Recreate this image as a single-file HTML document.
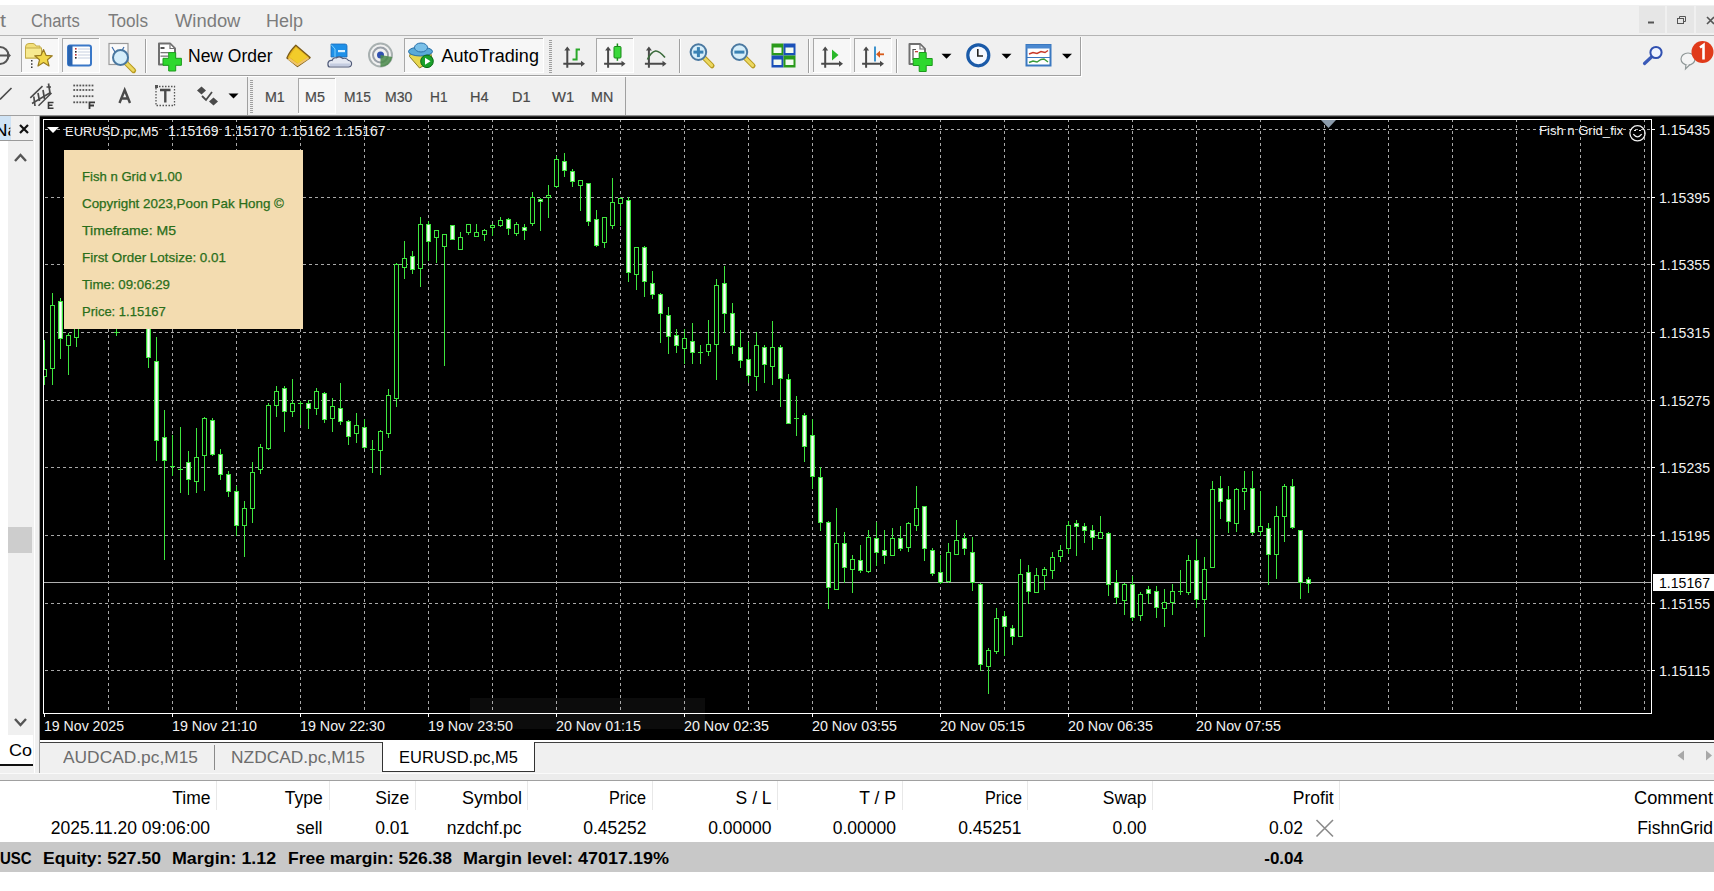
<!DOCTYPE html><html><head><meta charset="utf-8"><style>
*{margin:0;padding:0;box-sizing:border-box}
html,body{width:1714px;height:891px;overflow:hidden;background:#f0f0f0;font-family:"Liberation Sans",sans-serif;position:relative}
.a{position:absolute}
</style></head><body>
<div class="a" style="left:0;top:0;width:1714px;height:5px;background:#fff"></div>
<div class="a" style="left:1639px;top:6px;width:26px;height:27px;background:#e6e6e6"></div>
<div class="a" style="left:1667px;top:6px;width:27px;height:27px;background:#e6e6e6"></div>
<div class="a" style="left:1696px;top:6px;width:18px;height:27px;background:#e6e6e6"></div>
<div class="a" style="left:0;top:35px;width:1714px;height:1px;background:#b4b4b4"></div>
<div class="a" style="left:0;top:75px;width:1081px;height:1px;background:#a0a0a0"></div>
<div class="a" style="left:0;top:76px;width:1082px;height:1px;background:#fff"></div>
<div class="a" style="left:1081px;top:37px;width:1px;height:39px;background:#fff"></div>
<svg style="position:absolute;left:0;top:0" width="1714" height="116" viewBox="0 0 1714 116">
<circle cx="0" cy="55.5" r="8.5" fill="none" stroke="#555" stroke-width="2"/><path d="M-2 55.5H9" stroke="#555" stroke-width="2"/><path d="M7 52L11 55.5L7 59Z" fill="#555"/>
<rect x="21" y="38" width="38" height="35" fill="#f7f7f7"/><rect x="21" y="38" width="38" height="1" fill="#a8a8a8"/><rect x="21" y="38" width="1" height="35" fill="#a8a8a8"/><rect x="58" y="38" width="1" height="35" fill="#ffffff"/><rect x="21" y="72" width="38" height="1" fill="#ffffff"/>
<rect x="62" y="38" width="38" height="35" fill="#f7f7f7"/><rect x="62" y="38" width="38" height="1" fill="#a8a8a8"/><rect x="62" y="38" width="1" height="35" fill="#a8a8a8"/><rect x="99" y="38" width="1" height="35" fill="#ffffff"/><rect x="62" y="72" width="38" height="1" fill="#ffffff"/>
<path d="M25.5 47Q25.5 43.5 29 43.5H33Q35 43.5 36 46H40V58H25.5Z" fill="#f3e07a" stroke="#c4ac48" stroke-width="1"/>
<rect x="25.5" y="48" width="16" height="10" fill="#f7ea90" stroke="#c4ac48" stroke-width="1"/>
<path d="M43.5 49.5L46 55.3L52.3 55.8L47.5 59.8L49 66L43.5 62.6L38 66L39.5 59.8L34.7 55.8L41 55.3Z" fill="#f2d84a" stroke="#9a7c20" stroke-width="1.2" stroke-linejoin="round"/>
<rect x="31" y="60" width="1.5" height="1.5" fill="#333"/><rect x="31" y="63.3" width="1.5" height="1.5" fill="#333"/><rect x="31" y="66.5" width="1.5" height="1.5" fill="#333"/>
<rect x="68" y="45.5" width="23" height="20" rx="2" fill="#fff" stroke="#3a78c8" stroke-width="2"/>
<rect x="68" y="45.5" width="4.5" height="20" fill="#2a64b0"/>
<rect x="75" y="48.0" width="1.6" height="1.6" fill="#c03030"/><rect x="78" y="48.5" width="12" height="1" fill="#c8d0e0"/>
<rect x="75" y="51.0" width="1.6" height="1.6" fill="#222"/><rect x="78" y="51.5" width="12" height="1" fill="#c8d0e0"/>
<rect x="75" y="54.0" width="1.6" height="1.6" fill="#c03030"/><rect x="78" y="54.5" width="12" height="1" fill="#c8d0e0"/>
<rect x="75" y="57.0" width="1.6" height="1.6" fill="#222"/><rect x="78" y="57.5" width="12" height="1" fill="#c8d0e0"/>
<rect x="109" y="43.5" width="19" height="21" fill="#fafafa" stroke="#9a9a9a" stroke-width="1.2"/>
<path d="M112 47L115 52M124 47L121 52" stroke="#3a6aa8" stroke-width="1.2"/>
<path d="M125.75 62.75L133.625 70.625" stroke="#b89a20" stroke-width="5" stroke-linecap="round"/><path d="M126.125 63.125L133.25 70.25" stroke="#ecd860" stroke-width="3" stroke-linecap="round"/><circle cx="120.5" cy="57.5" r="7.5" fill="#d6eefa" stroke="#4a78a0" stroke-width="2"/>
<rect x="145" y="39" width="1" height="34" fill="#a0a0a0"/><rect x="146" y="39" width="1" height="34" fill="#ffffff"/>
<path d="M159 43.5H170L175 48.5V64.5H159Z" fill="#fff" stroke="#707070" stroke-width="2" stroke-linejoin="round"/><path d="M170 44.5V48.5H174" fill="#fff" stroke="#707070" stroke-width="1.2"/>
<rect x="160.5" y="47" width="4" height="2" fill="#555"/><rect x="160.5" y="52" width="9" height="1.3" fill="#777"/><rect x="160.5" y="55.5" width="8" height="1.3" fill="#777"/>
<path d="M168.7 52.599999999999994H175.7V58.3H181.39999999999998V65.3H175.7V71.0H168.7V65.3H163.0V58.3H168.7Z" fill="#2ed82e" stroke="#1c9a1c" stroke-width="1"/>
<path d="M295.8 45.3L310.1 57.6L297.5 66.5L286.9 58Q289.5 51.5 295.8 45.3Z" fill="#e6b41e" stroke="#7a5a18" stroke-width="1.3" stroke-linejoin="round"/>
<path d="M296 47.5L307.5 57L298 63.5L289.5 57Q292 52 296 47.5Z" fill="#f2cc2a"/>
<path d="M288.5 58.5L297.5 65L308.5 57.8" stroke="#f0c468" stroke-width="2.2" fill="none"/>
<path d="M331 44H345Q347 44 347 46V57H331Z" fill="#1e90e8" stroke="#1a6ab8" stroke-width="0.8"/>
<path d="M331 44.5L335 49V57" stroke="#7cd0ff" stroke-width="1" fill="none"/><rect x="338" y="50" width="7" height="2.2" fill="#d8f0ff"/>
<path d="M329.5 67Q327.5 66.5 328 63Q328.8 60 332 60.5Q333 57.5 336.5 57.8Q339.5 55.5 343 58.5Q346.5 57.5 348.5 60.5Q352 61 351.5 64.5Q351 67 348.5 67Z" fill="#e4e8f2" stroke="#505a78" stroke-width="1.2"/>
<rect x="330" y="63.5" width="20" height="2.5" fill="#c4cce0"/>
<circle cx="380.5" cy="55" r="11.5" fill="none" stroke="#a8b0b0" stroke-width="2"/><circle cx="380.5" cy="55" r="7.5" fill="none" stroke="#9aa0a8" stroke-width="2"/><circle cx="380.5" cy="55" r="3.5" fill="#3050b0"/>
<path d="M380.5 55L392.3 57A12 12 0 0 1 380.5 67Z" fill="#4a8a4a" opacity="0.85"/>
<rect x="404" y="38" width="140" height="35" fill="#f7f7f7"/><rect x="404" y="38" width="140" height="1" fill="#a8a8a8"/><rect x="404" y="38" width="1" height="35" fill="#a8a8a8"/><rect x="543" y="38" width="1" height="35" fill="#ffffff"/><rect x="404" y="72" width="140" height="1" fill="#ffffff"/>
<path d="M409.5 56.5L419.5 68L432.5 60.5L430.5 52.5H410.5Z" fill="#e8d850" stroke="#8a7a20" stroke-width="1"/>
<ellipse cx="420.5" cy="51.5" rx="12" ry="4.5" fill="#5aaad8" stroke="#2a70a8" stroke-width="1"/><ellipse cx="421" cy="47.5" rx="6.5" ry="4.5" fill="#7ac0e8" stroke="#2a70a8" stroke-width="1"/>
<circle cx="427" cy="61.3" r="6.3" fill="#1aa02a" stroke="#0a6a14" stroke-width="1"/><path d="M425 57.8L430.5 61.3L425 64.8Z" fill="#fff"/>
<rect x="549" y="40" width="3" height="1" fill="#a0a0a0"/><rect x="549" y="42" width="3" height="1" fill="#a0a0a0"/><rect x="549" y="44" width="3" height="1" fill="#a0a0a0"/><rect x="549" y="46" width="3" height="1" fill="#a0a0a0"/><rect x="549" y="48" width="3" height="1" fill="#a0a0a0"/><rect x="549" y="50" width="3" height="1" fill="#a0a0a0"/><rect x="549" y="52" width="3" height="1" fill="#a0a0a0"/><rect x="549" y="54" width="3" height="1" fill="#a0a0a0"/><rect x="549" y="56" width="3" height="1" fill="#a0a0a0"/><rect x="549" y="58" width="3" height="1" fill="#a0a0a0"/><rect x="549" y="60" width="3" height="1" fill="#a0a0a0"/><rect x="549" y="62" width="3" height="1" fill="#a0a0a0"/><rect x="549" y="64" width="3" height="1" fill="#a0a0a0"/><rect x="549" y="66" width="3" height="1" fill="#a0a0a0"/><rect x="549" y="68" width="3" height="1" fill="#a0a0a0"/><rect x="549" y="70" width="3" height="1" fill="#a0a0a0"/><rect x="549" y="72" width="3" height="1" fill="#a0a0a0"/>
<path d="M567.3 48.5V67.8 M563.3 63.8H583" stroke="#4a4a4a" stroke-width="2" fill="none"/><path d="M564.3 50.5L567.3 46.5L570.3 50.5Z M581 60.8L585 63.8L581 66.8Z" fill="#4a4a4a"/>
<path d="M576.6 48.5V60.5M576.6 49.5H580M572.5 59.5H576.6" stroke="#2aa82a" stroke-width="2" fill="none"/>
<rect x="596" y="38" width="38" height="35" fill="#f7f7f7"/><rect x="596" y="38" width="38" height="1" fill="#a8a8a8"/><rect x="596" y="38" width="1" height="35" fill="#a8a8a8"/><rect x="633" y="38" width="1" height="35" fill="#ffffff"/><rect x="596" y="72" width="38" height="1" fill="#ffffff"/>
<path d="M608.1 48.5V67.8 M604.1 63.8H623.5" stroke="#4a4a4a" stroke-width="2" fill="none"/><path d="M605.1 50.5L608.1 46.5L611.1 50.5Z M621.5 60.8L625.5 63.8L621.5 66.8Z" fill="#4a4a4a"/>
<path d="M617.4 43.5V60.8" stroke="#1a8a1a" stroke-width="1.5"/><rect x="614" y="46.5" width="7" height="11.5" rx="1" fill="#3ad83a" stroke="#1a8a1a" stroke-width="1"/>
<path d="M648.9 48.5V67.8 M644.9 63.8H664.5" stroke="#4a4a4a" stroke-width="2" fill="none"/><path d="M645.9 50.5L648.9 46.5L651.9 50.5Z M662.5 60.8L666.5 63.8L662.5 66.8Z" fill="#4a4a4a"/>
<path d="M647.5 59.5Q651 52 655.5 51Q659 50.5 665 57.5" stroke="#3a6a3a" stroke-width="1.6" fill="none"/>
<rect x="679" y="39" width="1" height="34" fill="#a0a0a0"/><rect x="680" y="39" width="1" height="34" fill="#ffffff"/>
<path d="M703.86 57.56L712.05 65.75" stroke="#b89a20" stroke-width="5" stroke-linecap="round"/><path d="M704.25 57.95L711.66 65.36" stroke="#ecd860" stroke-width="3" stroke-linecap="round"/><circle cx="698.4" cy="52.1" r="7.8" fill="#d6eefa" stroke="#4a78a0" stroke-width="2"/><path d="M693.4 52.1H703.4" stroke="#3a82b4" stroke-width="3"/><path d="M698.4 47.1V57.1" stroke="#3a82b4" stroke-width="3"/>
<path d="M744.86 57.56L753.05 65.75" stroke="#b89a20" stroke-width="5" stroke-linecap="round"/><path d="M745.25 57.95L752.66 65.36" stroke="#ecd860" stroke-width="3" stroke-linecap="round"/><circle cx="739.4" cy="52.1" r="7.8" fill="#d6eefa" stroke="#4a78a0" stroke-width="2"/><path d="M734.4 52.1H744.4" stroke="#3a82b4" stroke-width="3"/>
<rect x="771.5" y="43.5" width="12" height="12" fill="#2a9a1a"/><rect x="783.5" y="43.5" width="12" height="12" fill="#1a50b8"/><rect x="771.5" y="55.5" width="12" height="12" fill="#1a50b8"/><rect x="783.5" y="55.5" width="12" height="12" fill="#2a9a1a"/>
<rect x="773.5" y="47.5" width="8" height="5.5" fill="#f4fbf0"/>
<rect x="785.5" y="47.5" width="8" height="5.5" fill="#f4fbf0"/>
<rect x="773.5" y="59.5" width="8" height="5.5" fill="#f4fbf0"/>
<rect x="785.5" y="59.5" width="8" height="5.5" fill="#f4fbf0"/>
<rect x="808" y="39" width="1" height="34" fill="#a0a0a0"/><rect x="809" y="39" width="1" height="34" fill="#ffffff"/>
<rect x="813" y="38" width="38" height="35" fill="#f7f7f7"/><rect x="813" y="38" width="38" height="1" fill="#a8a8a8"/><rect x="813" y="38" width="1" height="35" fill="#a8a8a8"/><rect x="850" y="38" width="1" height="35" fill="#ffffff"/><rect x="813" y="72" width="38" height="1" fill="#ffffff"/>
<rect x="854" y="38" width="38" height="35" fill="#f7f7f7"/><rect x="854" y="38" width="38" height="1" fill="#a8a8a8"/><rect x="854" y="38" width="1" height="35" fill="#a8a8a8"/><rect x="891" y="38" width="1" height="35" fill="#ffffff"/><rect x="854" y="72" width="38" height="1" fill="#ffffff"/>
<path d="M825.2 48.5V67.8 M821.2 63.8H841" stroke="#4a4a4a" stroke-width="2" fill="none"/><path d="M822.2 50.5L825.2 46.5L828.2 50.5Z M839 60.8L843 63.8L839 66.8Z" fill="#4a4a4a"/>
<path d="M832 49.5L838.5 55L832 60.5Z" fill="#2ab82a"/>
<path d="M866.1 48.5V67.8 M862.1 63.8H882" stroke="#4a4a4a" stroke-width="2" fill="none"/><path d="M863.1 50.5L866.1 46.5L869.1 50.5Z M880 60.8L884 63.8L880 66.8Z" fill="#4a4a4a"/>
<path d="M875 46.5V61.5" stroke="#2a88c8" stroke-width="1.8"/><path d="M884 54.3H878" stroke="#d85a1a" stroke-width="1.8"/><path d="M880 50.8L876 54.3L880 57.8Z" fill="#d85a1a"/>
<rect x="896" y="39" width="1" height="34" fill="#a0a0a0"/><rect x="897" y="39" width="1" height="34" fill="#ffffff"/>
<path d="M909.5 44H920.0L925.0 49V64H909.5Z" fill="#fff" stroke="#707070" stroke-width="2" stroke-linejoin="round"/><path d="M920.0 45V49H924.0" fill="#fff" stroke="#707070" stroke-width="1.2"/>
<path d="M913 49V60M913 49.5H916" stroke="#555" stroke-width="1.2" fill="none"/><rect x="915" y="51" width="3" height="1.3" fill="#c04040"/>
<path d="M919.2 52.5H926.2V58.5H932.2V65.5H926.2V71.5H919.2V65.5H913.2V58.5H919.2Z" fill="#2ed82e" stroke="#1c9a1c" stroke-width="1"/>
<path d="M941.5 53.8H951.5L946.5 58.8Z" fill="#000"/>
<circle cx="978.3" cy="55.3" r="10.5" fill="#f4f8ff" stroke="#1a5aa8" stroke-width="3.2"/>
<path d="M977.8 49V56H983" stroke="#222" stroke-width="1.6" fill="none"/>
<path d="M1001.5 53.8H1011.5L1006.5 58.8Z" fill="#000"/>
<rect x="1026.5" y="45" width="24" height="20.5" fill="#fff" stroke="#3a78c0" stroke-width="2"/><rect x="1026.5" y="45" width="24" height="3.5" fill="#4a88d0"/><rect x="1027" y="57" width="23" height="1" fill="#3a78c0"/>
<path d="M1029 54L1033 52.5L1037 53.5L1041 51.5L1045 52.5L1048 50.5" stroke="#c83a2a" stroke-width="1.4" fill="none"/><path d="M1029 62.5L1033 61L1037 62L1041 59.5L1044 59L1048 62" stroke="#3a9a3a" stroke-width="1.4" fill="none"/>
<path d="M1062 53.8H1072L1067 58.8Z" fill="#000"/>
<rect x="1080" y="37" width="1" height="38" fill="#a0a0a0"/>
<path d="M1651.5 57L1644.5 63.5" stroke="#3a5ab8" stroke-width="3.2" stroke-linecap="round"/><circle cx="1656" cy="52.5" r="5.6" fill="#f0f4ff" stroke="#3050b0" stroke-width="2"/>
<ellipse cx="1688" cy="59" rx="7" ry="6" fill="#f4f4f4" stroke="#909898" stroke-width="1.2"/><path d="M1686 64L1685.5 69L1690 64.5" fill="#f4f4f4" stroke="#909898" stroke-width="1.2"/>
<circle cx="1702.5" cy="52" r="11" fill="#e03a1a"/>
<path d="M1700 47.5L1703.5 45V59.5" stroke="#fff" stroke-width="2.6" fill="none"/>
<rect x="1648" y="21.5" width="6" height="2" fill="#555"/>
<rect x="1677.5" y="18.5" width="6" height="5" fill="none" stroke="#555" stroke-width="1"/><path d="M1679.5 18.5V16.5H1685.5V21.5H1683.5" fill="none" stroke="#555" stroke-width="1"/>
<path d="M1707 17L1714 24M1714 17L1707 24" stroke="#555" stroke-width="1.6"/>
<path d="M0 99.5L11.5 88" stroke="#4a4a4a" stroke-width="1.6"/>
<path d="M30.3 97.9L42.5 86.1M32 103.5L50.5 92.5M38.5 105.8L51.5 93" stroke="#4a4a4a" stroke-width="1.5" fill="none"/>
<path d="M33.8 96.5L35 106M38 93L39.5 101M43 90L44.5 99M48.5 83.5L50 93M46.5 87H51" stroke="#4a4a4a" stroke-width="1.7" fill="none"/>
<path d="M53.5 102.5H48.5V108.3H53.5M48.5 105.3H52.5" stroke="#3a3a3a" stroke-width="1.6" fill="none"/>
<rect x="73.30" y="84.6" width="1.8" height="1.8" fill="#555"/>
<rect x="76.35" y="84.6" width="1.8" height="1.8" fill="#555"/>
<rect x="79.40" y="84.6" width="1.8" height="1.8" fill="#555"/>
<rect x="82.45" y="84.6" width="1.8" height="1.8" fill="#555"/>
<rect x="85.50" y="84.6" width="1.8" height="1.8" fill="#555"/>
<rect x="88.55" y="84.6" width="1.8" height="1.8" fill="#555"/>
<rect x="91.60" y="84.6" width="1.8" height="1.8" fill="#555"/>
<rect x="73.30" y="89.1" width="1.8" height="1.8" fill="#555"/>
<rect x="76.35" y="89.1" width="1.8" height="1.8" fill="#555"/>
<rect x="79.40" y="89.1" width="1.8" height="1.8" fill="#555"/>
<rect x="82.45" y="89.1" width="1.8" height="1.8" fill="#555"/>
<rect x="85.50" y="89.1" width="1.8" height="1.8" fill="#555"/>
<rect x="88.55" y="89.1" width="1.8" height="1.8" fill="#555"/>
<rect x="91.60" y="89.1" width="1.8" height="1.8" fill="#555"/>
<rect x="73.30" y="95.3" width="1.8" height="1.8" fill="#555"/>
<rect x="76.35" y="95.3" width="1.8" height="1.8" fill="#555"/>
<rect x="79.40" y="95.3" width="1.8" height="1.8" fill="#555"/>
<rect x="82.45" y="95.3" width="1.8" height="1.8" fill="#555"/>
<rect x="85.50" y="95.3" width="1.8" height="1.8" fill="#555"/>
<rect x="88.55" y="95.3" width="1.8" height="1.8" fill="#555"/>
<rect x="91.60" y="95.3" width="1.8" height="1.8" fill="#555"/>
<rect x="73.30" y="101.39999999999999" width="1.8" height="1.8" fill="#555"/>
<rect x="76.35" y="101.39999999999999" width="1.8" height="1.8" fill="#555"/>
<rect x="79.40" y="101.39999999999999" width="1.8" height="1.8" fill="#555"/>
<rect x="82.45" y="101.39999999999999" width="1.8" height="1.8" fill="#555"/>
<rect x="85.50" y="101.39999999999999" width="1.8" height="1.8" fill="#555"/>
<path d="M89.5 109V102.3H95M89.5 105.5H94" stroke="#3a3a3a" stroke-width="1.8" fill="none"/>
<path d="M119.5 103L124.7 90L130 103M121.5 98.5H128" stroke="#4a4a4a" stroke-width="2.4" fill="none"/>
<rect x="156" y="86.5" width="18.5" height="19" fill="none" stroke="#555" stroke-width="1.3" stroke-dasharray="1.5 1.5"/><rect x="155" y="85" width="3" height="3" fill="#555"/>
<path d="M160 90H170.5M165.3 90V102.5" stroke="#4a4a4a" stroke-width="2.4" fill="none"/>
<path d="M197 90.5L201.5 86.5L206 90.5L201.5 94.5Z M209 101.5L213.5 97.5L218 101.5L213.5 105.5Z" fill="#4a4a4a"/><path d="M202 96L206 100L212 92" stroke="#4a4a4a" stroke-width="1.8" fill="none"/>
<path d="M228.5 93.6H238.5L233.5 98.6Z" fill="#000"/>
<rect x="247" y="77" width="1" height="38" fill="#a0a0a0"/>
<rect x="250" y="80" width="3" height="1" fill="#a0a0a0"/><rect x="250" y="82" width="3" height="1" fill="#a0a0a0"/><rect x="250" y="84" width="3" height="1" fill="#a0a0a0"/><rect x="250" y="86" width="3" height="1" fill="#a0a0a0"/><rect x="250" y="88" width="3" height="1" fill="#a0a0a0"/><rect x="250" y="90" width="3" height="1" fill="#a0a0a0"/><rect x="250" y="92" width="3" height="1" fill="#a0a0a0"/><rect x="250" y="94" width="3" height="1" fill="#a0a0a0"/><rect x="250" y="96" width="3" height="1" fill="#a0a0a0"/><rect x="250" y="98" width="3" height="1" fill="#a0a0a0"/><rect x="250" y="100" width="3" height="1" fill="#a0a0a0"/><rect x="250" y="102" width="3" height="1" fill="#a0a0a0"/><rect x="250" y="104" width="3" height="1" fill="#a0a0a0"/><rect x="250" y="106" width="3" height="1" fill="#a0a0a0"/><rect x="250" y="108" width="3" height="1" fill="#a0a0a0"/><rect x="250" y="110" width="3" height="1" fill="#a0a0a0"/><rect x="250" y="112" width="3" height="1" fill="#a0a0a0"/>
<rect x="298" y="78" width="38" height="36" fill="#f7f7f7"/><rect x="298" y="78" width="38" height="1" fill="#a8a8a8"/><rect x="298" y="78" width="1" height="36" fill="#a8a8a8"/><rect x="335" y="78" width="1" height="36" fill="#ffffff"/><rect x="298" y="113" width="38" height="1" fill="#ffffff"/>
<rect x="625" y="77" width="1" height="38" fill="#a0a0a0"/>
</svg>
<div class="a" style="left:0;top:116px;width:40px;height:657px;background:#f0f0f0"></div>
<div class="a" style="left:0;top:141px;width:8px;height:594px;background:#fff"></div>
<div class="a" style="left:8px;top:527px;width:24px;height:26px;background:#cdcdcd"></div>
<div class="a" style="left:34px;top:116px;width:1px;height:657px;background:#fff"></div>
<div class="a" style="left:0;top:116px;width:11px;height:25px;background:#cfe3f5"></div>
<div class="a" style="left:0;top:140px;width:33px;height:1px;background:#9a9a9a"></div>
<div class="a" style="left:0;top:735px;width:33px;height:30px;background:#fff"></div>
<div class="a" style="left:0;top:764px;width:33px;height:2px;background:#111"></div>
<div class="a" style="left:39px;top:116px;width:1px;height:657px;background:#a0a0a0"></div>
<div class="a" style="left:40px;top:115px;width:1674px;height:1px;background:#909090"></div>
<div class="a" style="left:40px;top:116px;width:1674px;height:1px;background:#303030"></div>
<div class="a" style="left:0;top:115px;width:40px;height:1px;background:#a0a0a0"></div>
<svg style="position:absolute;left:40px;top:117px" width="1674" height="623" viewBox="40 117 1674 623" shape-rendering="crispEdges">
<rect x="40" y="117" width="1674" height="623" fill="#000"/>
<rect x="470" y="698" width="235" height="31" fill="#0c0c0c"/>
<path d="M45 129.5H1651 M45 197.5H1651 M45 264.5H1651 M45 332.5H1651 M45 400.5H1651 M45 467.5H1651 M45 535.5H1651 M45 603.5H1651 M45 670.5H1651 M108.5 119V713 M172.5 119V713 M236.5 119V713 M300.5 119V713 M364.5 119V713 M428.5 119V713 M492.5 119V713 M556.5 119V713 M620.5 119V713 M684.5 119V713 M748.5 119V713 M812.5 119V713 M876.5 119V713 M940.5 119V713 M1004.5 119V713 M1068.5 119V713 M1132.5 119V713 M1196.5 119V713 M1260.5 119V713 M1324.5 119V713 M1388.5 119V713 M1452.5 119V713 M1516.5 119V713 M1580.5 119V713 M1644.5 119V713" stroke="#a8a8a8" stroke-width="1" stroke-dasharray="3 3" fill="none"/>
<rect x="44" y="582" width="1607" height="1" fill="#b0b0b0"/>
<svg x="44" y="120" width="1607" height="593" viewBox="44 120 1607 593" overflow="hidden">
<rect x="44" y="340" width="1" height="45" fill="#3ee63e"/>
<rect x="42" y="369" width="5" height="8" fill="#3ee63e"/>
<rect x="43" y="370" width="3" height="6" fill="#000"/>
<rect x="52" y="293" width="1" height="92" fill="#3ee63e"/>
<rect x="50" y="305" width="5" height="64" fill="#3ee63e"/>
<rect x="51" y="306" width="3" height="62" fill="#000"/>
<rect x="60" y="298" width="1" height="61" fill="#3ee63e"/>
<rect x="58" y="301" width="5" height="38" fill="#3ee63e"/>
<rect x="59" y="302" width="3" height="36" fill="#c8f8c8"/>
<rect x="60" y="302" width="1" height="36" fill="#fff"/>
<rect x="68" y="333" width="1" height="42" fill="#3ee63e"/>
<rect x="66" y="335" width="5" height="11" fill="#3ee63e"/>
<rect x="67" y="336" width="3" height="9" fill="#000"/>
<rect x="76" y="320" width="1" height="27" fill="#3ee63e"/>
<rect x="74" y="326" width="5" height="12" fill="#3ee63e"/>
<rect x="75" y="327" width="3" height="10" fill="#000"/>
<rect x="84" y="300" width="1" height="28" fill="#3ee63e"/>
<rect x="82" y="310" width="5" height="13" fill="#3ee63e"/>
<rect x="83" y="311" width="3" height="11" fill="#000"/>
<rect x="92" y="290" width="1" height="31" fill="#3ee63e"/>
<rect x="90" y="295" width="5" height="18" fill="#3ee63e"/>
<rect x="91" y="296" width="3" height="16" fill="#c8f8c8"/>
<rect x="92" y="296" width="1" height="16" fill="#fff"/>
<rect x="100" y="280" width="1" height="36" fill="#3ee63e"/>
<rect x="98" y="290" width="5" height="16" fill="#3ee63e"/>
<rect x="99" y="291" width="3" height="14" fill="#000"/>
<rect x="108" y="285" width="1" height="26" fill="#3ee63e"/>
<rect x="106" y="290" width="5" height="11" fill="#3ee63e"/>
<rect x="107" y="291" width="3" height="9" fill="#c8f8c8"/>
<rect x="108" y="291" width="1" height="9" fill="#fff"/>
<rect x="116" y="305" width="1" height="31" fill="#3ee63e"/>
<rect x="114" y="332" width="5" height="1" fill="#3ee63e"/>
<rect x="124" y="305" width="1" height="21" fill="#3ee63e"/>
<rect x="122" y="310" width="5" height="11" fill="#3ee63e"/>
<rect x="123" y="311" width="3" height="9" fill="#000"/>
<rect x="132" y="300" width="1" height="26" fill="#3ee63e"/>
<rect x="130" y="305" width="5" height="14" fill="#3ee63e"/>
<rect x="131" y="306" width="3" height="12" fill="#c8f8c8"/>
<rect x="132" y="306" width="1" height="12" fill="#fff"/>
<rect x="140" y="300" width="1" height="27" fill="#3ee63e"/>
<rect x="138" y="308" width="5" height="13" fill="#3ee63e"/>
<rect x="139" y="309" width="3" height="11" fill="#000"/>
<rect x="148" y="300" width="1" height="68" fill="#3ee63e"/>
<rect x="146" y="310" width="5" height="48" fill="#3ee63e"/>
<rect x="147" y="311" width="3" height="46" fill="#c8f8c8"/>
<rect x="148" y="311" width="1" height="46" fill="#fff"/>
<rect x="156" y="337" width="1" height="124" fill="#3ee63e"/>
<rect x="154" y="361" width="5" height="80" fill="#3ee63e"/>
<rect x="155" y="362" width="3" height="78" fill="#c8f8c8"/>
<rect x="156" y="362" width="1" height="78" fill="#fff"/>
<rect x="164" y="410" width="1" height="150" fill="#3ee63e"/>
<rect x="162" y="437" width="5" height="24" fill="#3ee63e"/>
<rect x="163" y="438" width="3" height="22" fill="#c8f8c8"/>
<rect x="164" y="438" width="1" height="22" fill="#fff"/>
<rect x="172" y="435" width="1" height="41" fill="#3ee63e"/>
<rect x="170" y="466" width="5" height="1" fill="#3ee63e"/>
<rect x="180" y="427" width="1" height="66" fill="#3ee63e"/>
<rect x="178" y="469" width="5" height="1" fill="#3ee63e"/>
<rect x="188" y="451" width="1" height="44" fill="#3ee63e"/>
<rect x="186" y="462" width="5" height="18" fill="#3ee63e"/>
<rect x="187" y="463" width="3" height="16" fill="#c8f8c8"/>
<rect x="188" y="463" width="1" height="16" fill="#fff"/>
<rect x="196" y="428" width="1" height="65" fill="#3ee63e"/>
<rect x="194" y="457" width="5" height="25" fill="#3ee63e"/>
<rect x="195" y="458" width="3" height="23" fill="#000"/>
<rect x="204" y="417" width="1" height="74" fill="#3ee63e"/>
<rect x="202" y="418" width="5" height="38" fill="#3ee63e"/>
<rect x="203" y="419" width="3" height="36" fill="#000"/>
<rect x="212" y="418" width="1" height="38" fill="#3ee63e"/>
<rect x="210" y="420" width="5" height="35" fill="#3ee63e"/>
<rect x="211" y="421" width="3" height="33" fill="#c8f8c8"/>
<rect x="212" y="421" width="1" height="33" fill="#fff"/>
<rect x="220" y="449" width="1" height="31" fill="#3ee63e"/>
<rect x="218" y="454" width="5" height="21" fill="#3ee63e"/>
<rect x="219" y="455" width="3" height="19" fill="#c8f8c8"/>
<rect x="220" y="455" width="1" height="19" fill="#fff"/>
<rect x="228" y="471" width="1" height="26" fill="#3ee63e"/>
<rect x="226" y="474" width="5" height="18" fill="#3ee63e"/>
<rect x="227" y="475" width="3" height="16" fill="#c8f8c8"/>
<rect x="228" y="475" width="1" height="16" fill="#fff"/>
<rect x="236" y="486" width="1" height="50" fill="#3ee63e"/>
<rect x="234" y="491" width="5" height="35" fill="#3ee63e"/>
<rect x="235" y="492" width="3" height="33" fill="#c8f8c8"/>
<rect x="236" y="492" width="1" height="33" fill="#fff"/>
<rect x="244" y="501" width="1" height="56" fill="#3ee63e"/>
<rect x="242" y="508" width="5" height="18" fill="#3ee63e"/>
<rect x="243" y="509" width="3" height="16" fill="#000"/>
<rect x="252" y="462" width="1" height="61" fill="#3ee63e"/>
<rect x="250" y="472" width="5" height="37" fill="#3ee63e"/>
<rect x="251" y="473" width="3" height="35" fill="#000"/>
<rect x="260" y="444" width="1" height="30" fill="#3ee63e"/>
<rect x="258" y="447" width="5" height="23" fill="#3ee63e"/>
<rect x="259" y="448" width="3" height="21" fill="#000"/>
<rect x="268" y="403" width="1" height="47" fill="#3ee63e"/>
<rect x="266" y="405" width="5" height="44" fill="#3ee63e"/>
<rect x="267" y="406" width="3" height="42" fill="#000"/>
<rect x="276" y="386" width="1" height="31" fill="#3ee63e"/>
<rect x="274" y="391" width="5" height="15" fill="#3ee63e"/>
<rect x="275" y="392" width="3" height="13" fill="#000"/>
<rect x="284" y="386" width="1" height="46" fill="#3ee63e"/>
<rect x="282" y="388" width="5" height="24" fill="#3ee63e"/>
<rect x="283" y="389" width="3" height="22" fill="#c8f8c8"/>
<rect x="284" y="389" width="1" height="22" fill="#fff"/>
<rect x="292" y="379" width="1" height="38" fill="#3ee63e"/>
<rect x="290" y="403" width="5" height="9" fill="#3ee63e"/>
<rect x="291" y="404" width="3" height="7" fill="#000"/>
<rect x="300" y="401" width="1" height="24" fill="#3ee63e"/>
<rect x="298" y="403" width="5" height="1" fill="#3ee63e"/>
<rect x="308" y="400" width="1" height="29" fill="#3ee63e"/>
<rect x="306" y="403" width="5" height="6" fill="#3ee63e"/>
<rect x="307" y="404" width="3" height="4" fill="#c8f8c8"/>
<rect x="308" y="404" width="1" height="4" fill="#fff"/>
<rect x="316" y="388" width="1" height="27" fill="#3ee63e"/>
<rect x="314" y="391" width="5" height="18" fill="#3ee63e"/>
<rect x="315" y="392" width="3" height="16" fill="#000"/>
<rect x="324" y="392" width="1" height="31" fill="#3ee63e"/>
<rect x="322" y="393" width="5" height="27" fill="#3ee63e"/>
<rect x="323" y="394" width="3" height="25" fill="#c8f8c8"/>
<rect x="324" y="394" width="1" height="25" fill="#fff"/>
<rect x="332" y="398" width="1" height="34" fill="#3ee63e"/>
<rect x="330" y="406" width="5" height="13" fill="#3ee63e"/>
<rect x="331" y="407" width="3" height="11" fill="#000"/>
<rect x="340" y="383" width="1" height="42" fill="#3ee63e"/>
<rect x="338" y="408" width="5" height="14" fill="#3ee63e"/>
<rect x="339" y="409" width="3" height="12" fill="#c8f8c8"/>
<rect x="340" y="409" width="1" height="12" fill="#fff"/>
<rect x="348" y="420" width="1" height="25" fill="#3ee63e"/>
<rect x="346" y="421" width="5" height="16" fill="#3ee63e"/>
<rect x="347" y="422" width="3" height="14" fill="#c8f8c8"/>
<rect x="348" y="422" width="1" height="14" fill="#fff"/>
<rect x="356" y="413" width="1" height="30" fill="#3ee63e"/>
<rect x="354" y="425" width="5" height="9" fill="#3ee63e"/>
<rect x="355" y="426" width="3" height="7" fill="#000"/>
<rect x="364" y="419" width="1" height="30" fill="#3ee63e"/>
<rect x="362" y="427" width="5" height="21" fill="#3ee63e"/>
<rect x="363" y="428" width="3" height="19" fill="#c8f8c8"/>
<rect x="364" y="428" width="1" height="19" fill="#fff"/>
<rect x="372" y="440" width="1" height="33" fill="#3ee63e"/>
<rect x="370" y="449" width="5" height="1" fill="#3ee63e"/>
<rect x="380" y="430" width="1" height="45" fill="#3ee63e"/>
<rect x="378" y="431" width="5" height="20" fill="#3ee63e"/>
<rect x="379" y="432" width="3" height="18" fill="#000"/>
<rect x="388" y="389" width="1" height="49" fill="#3ee63e"/>
<rect x="386" y="395" width="5" height="39" fill="#3ee63e"/>
<rect x="387" y="396" width="3" height="37" fill="#000"/>
<rect x="396" y="263" width="1" height="144" fill="#3ee63e"/>
<rect x="394" y="264" width="5" height="135" fill="#3ee63e"/>
<rect x="395" y="265" width="3" height="133" fill="#000"/>
<rect x="404" y="241" width="1" height="38" fill="#3ee63e"/>
<rect x="402" y="258" width="5" height="10" fill="#3ee63e"/>
<rect x="403" y="259" width="3" height="8" fill="#000"/>
<rect x="412" y="251" width="1" height="23" fill="#3ee63e"/>
<rect x="410" y="256" width="5" height="14" fill="#3ee63e"/>
<rect x="411" y="257" width="3" height="12" fill="#c8f8c8"/>
<rect x="412" y="257" width="1" height="12" fill="#fff"/>
<rect x="420" y="217" width="1" height="70" fill="#3ee63e"/>
<rect x="418" y="224" width="5" height="45" fill="#3ee63e"/>
<rect x="419" y="225" width="3" height="43" fill="#000"/>
<rect x="428" y="221" width="1" height="40" fill="#3ee63e"/>
<rect x="426" y="224" width="5" height="18" fill="#3ee63e"/>
<rect x="427" y="225" width="3" height="16" fill="#c8f8c8"/>
<rect x="428" y="225" width="1" height="16" fill="#fff"/>
<rect x="436" y="230" width="1" height="33" fill="#3ee63e"/>
<rect x="434" y="230" width="5" height="8" fill="#3ee63e"/>
<rect x="435" y="231" width="3" height="6" fill="#000"/>
<rect x="444" y="234" width="1" height="132" fill="#3ee63e"/>
<rect x="442" y="234" width="5" height="13" fill="#3ee63e"/>
<rect x="443" y="235" width="3" height="11" fill="#000"/>
<rect x="452" y="225" width="1" height="15" fill="#3ee63e"/>
<rect x="450" y="225" width="5" height="15" fill="#3ee63e"/>
<rect x="451" y="226" width="3" height="13" fill="#c8f8c8"/>
<rect x="452" y="226" width="1" height="13" fill="#fff"/>
<rect x="460" y="232" width="1" height="18" fill="#3ee63e"/>
<rect x="458" y="237" width="5" height="13" fill="#3ee63e"/>
<rect x="459" y="238" width="3" height="11" fill="#000"/>
<rect x="468" y="224" width="1" height="11" fill="#3ee63e"/>
<rect x="466" y="224" width="5" height="9" fill="#3ee63e"/>
<rect x="467" y="225" width="3" height="7" fill="#000"/>
<rect x="476" y="224" width="1" height="13" fill="#3ee63e"/>
<rect x="474" y="232" width="5" height="5" fill="#3ee63e"/>
<rect x="475" y="233" width="3" height="3" fill="#000"/>
<rect x="484" y="229" width="1" height="12" fill="#3ee63e"/>
<rect x="482" y="230" width="5" height="5" fill="#3ee63e"/>
<rect x="483" y="231" width="3" height="3" fill="#000"/>
<rect x="492" y="224" width="1" height="12" fill="#3ee63e"/>
<rect x="490" y="225" width="5" height="3" fill="#3ee63e"/>
<rect x="491" y="226" width="3" height="1" fill="#000"/>
<rect x="500" y="217" width="1" height="10" fill="#3ee63e"/>
<rect x="498" y="220" width="5" height="6" fill="#3ee63e"/>
<rect x="499" y="221" width="3" height="4" fill="#000"/>
<rect x="508" y="218" width="1" height="17" fill="#3ee63e"/>
<rect x="506" y="219" width="5" height="10" fill="#3ee63e"/>
<rect x="507" y="220" width="3" height="8" fill="#c8f8c8"/>
<rect x="508" y="220" width="1" height="8" fill="#fff"/>
<rect x="516" y="222" width="1" height="14" fill="#3ee63e"/>
<rect x="514" y="224" width="5" height="10" fill="#3ee63e"/>
<rect x="515" y="225" width="3" height="8" fill="#000"/>
<rect x="524" y="224" width="1" height="16" fill="#3ee63e"/>
<rect x="522" y="227" width="5" height="4" fill="#3ee63e"/>
<rect x="523" y="228" width="3" height="2" fill="#c8f8c8"/>
<rect x="524" y="228" width="1" height="2" fill="#fff"/>
<rect x="532" y="192" width="1" height="34" fill="#3ee63e"/>
<rect x="530" y="197" width="5" height="27" fill="#3ee63e"/>
<rect x="531" y="198" width="3" height="25" fill="#000"/>
<rect x="540" y="198" width="1" height="33" fill="#3ee63e"/>
<rect x="538" y="199" width="5" height="3" fill="#3ee63e"/>
<rect x="539" y="200" width="3" height="1" fill="#c8f8c8"/>
<rect x="540" y="200" width="1" height="1" fill="#fff"/>
<rect x="548" y="185" width="1" height="33" fill="#3ee63e"/>
<rect x="546" y="195" width="5" height="3" fill="#3ee63e"/>
<rect x="547" y="196" width="3" height="1" fill="#000"/>
<rect x="556" y="156" width="1" height="32" fill="#3ee63e"/>
<rect x="554" y="159" width="5" height="28" fill="#3ee63e"/>
<rect x="555" y="160" width="3" height="26" fill="#000"/>
<rect x="564" y="153" width="1" height="24" fill="#3ee63e"/>
<rect x="562" y="161" width="5" height="10" fill="#3ee63e"/>
<rect x="563" y="162" width="3" height="8" fill="#c8f8c8"/>
<rect x="564" y="162" width="1" height="8" fill="#fff"/>
<rect x="572" y="169" width="1" height="18" fill="#3ee63e"/>
<rect x="570" y="171" width="5" height="11" fill="#3ee63e"/>
<rect x="571" y="172" width="3" height="9" fill="#c8f8c8"/>
<rect x="572" y="172" width="1" height="9" fill="#fff"/>
<rect x="580" y="180" width="1" height="31" fill="#3ee63e"/>
<rect x="578" y="180" width="5" height="6" fill="#3ee63e"/>
<rect x="579" y="181" width="3" height="4" fill="#000"/>
<rect x="588" y="183" width="1" height="43" fill="#3ee63e"/>
<rect x="586" y="183" width="5" height="39" fill="#3ee63e"/>
<rect x="587" y="184" width="3" height="37" fill="#c8f8c8"/>
<rect x="588" y="184" width="1" height="37" fill="#fff"/>
<rect x="596" y="210" width="1" height="37" fill="#3ee63e"/>
<rect x="594" y="219" width="5" height="27" fill="#3ee63e"/>
<rect x="595" y="220" width="3" height="25" fill="#c8f8c8"/>
<rect x="596" y="220" width="1" height="25" fill="#fff"/>
<rect x="604" y="217" width="1" height="31" fill="#3ee63e"/>
<rect x="602" y="217" width="5" height="26" fill="#3ee63e"/>
<rect x="603" y="218" width="3" height="24" fill="#000"/>
<rect x="612" y="178" width="1" height="51" fill="#3ee63e"/>
<rect x="610" y="202" width="5" height="24" fill="#3ee63e"/>
<rect x="611" y="203" width="3" height="22" fill="#000"/>
<rect x="620" y="197" width="1" height="29" fill="#3ee63e"/>
<rect x="618" y="198" width="5" height="6" fill="#3ee63e"/>
<rect x="619" y="199" width="3" height="4" fill="#000"/>
<rect x="628" y="197" width="1" height="85" fill="#3ee63e"/>
<rect x="626" y="200" width="5" height="73" fill="#3ee63e"/>
<rect x="627" y="201" width="3" height="71" fill="#c8f8c8"/>
<rect x="628" y="201" width="1" height="71" fill="#fff"/>
<rect x="636" y="247" width="1" height="43" fill="#3ee63e"/>
<rect x="634" y="247" width="5" height="28" fill="#3ee63e"/>
<rect x="635" y="248" width="3" height="26" fill="#000"/>
<rect x="644" y="246" width="1" height="51" fill="#3ee63e"/>
<rect x="642" y="247" width="5" height="35" fill="#3ee63e"/>
<rect x="643" y="248" width="3" height="33" fill="#c8f8c8"/>
<rect x="644" y="248" width="1" height="33" fill="#fff"/>
<rect x="652" y="271" width="1" height="28" fill="#3ee63e"/>
<rect x="650" y="283" width="5" height="12" fill="#3ee63e"/>
<rect x="651" y="284" width="3" height="10" fill="#c8f8c8"/>
<rect x="652" y="284" width="1" height="10" fill="#fff"/>
<rect x="660" y="293" width="1" height="50" fill="#3ee63e"/>
<rect x="658" y="294" width="5" height="20" fill="#3ee63e"/>
<rect x="659" y="295" width="3" height="18" fill="#c8f8c8"/>
<rect x="660" y="295" width="1" height="18" fill="#fff"/>
<rect x="668" y="307" width="1" height="47" fill="#3ee63e"/>
<rect x="666" y="315" width="5" height="22" fill="#3ee63e"/>
<rect x="667" y="316" width="3" height="20" fill="#c8f8c8"/>
<rect x="668" y="316" width="1" height="20" fill="#fff"/>
<rect x="676" y="329" width="1" height="24" fill="#3ee63e"/>
<rect x="674" y="335" width="5" height="11" fill="#3ee63e"/>
<rect x="675" y="336" width="3" height="9" fill="#c8f8c8"/>
<rect x="676" y="336" width="1" height="9" fill="#fff"/>
<rect x="684" y="329" width="1" height="35" fill="#3ee63e"/>
<rect x="682" y="338" width="5" height="11" fill="#3ee63e"/>
<rect x="683" y="339" width="3" height="9" fill="#000"/>
<rect x="692" y="323" width="1" height="41" fill="#3ee63e"/>
<rect x="690" y="341" width="5" height="12" fill="#3ee63e"/>
<rect x="691" y="342" width="3" height="10" fill="#c8f8c8"/>
<rect x="692" y="342" width="1" height="10" fill="#fff"/>
<rect x="700" y="345" width="1" height="19" fill="#3ee63e"/>
<rect x="698" y="352" width="5" height="1" fill="#3ee63e"/>
<rect x="708" y="320" width="1" height="36" fill="#3ee63e"/>
<rect x="706" y="344" width="5" height="8" fill="#3ee63e"/>
<rect x="707" y="345" width="3" height="6" fill="#000"/>
<rect x="716" y="279" width="1" height="101" fill="#3ee63e"/>
<rect x="714" y="285" width="5" height="60" fill="#3ee63e"/>
<rect x="715" y="286" width="3" height="58" fill="#000"/>
<rect x="724" y="266" width="1" height="67" fill="#3ee63e"/>
<rect x="722" y="283" width="5" height="31" fill="#3ee63e"/>
<rect x="723" y="284" width="3" height="29" fill="#c8f8c8"/>
<rect x="724" y="284" width="1" height="29" fill="#fff"/>
<rect x="732" y="303" width="1" height="51" fill="#3ee63e"/>
<rect x="730" y="313" width="5" height="33" fill="#3ee63e"/>
<rect x="731" y="314" width="3" height="31" fill="#c8f8c8"/>
<rect x="732" y="314" width="1" height="31" fill="#fff"/>
<rect x="740" y="330" width="1" height="38" fill="#3ee63e"/>
<rect x="738" y="347" width="5" height="14" fill="#3ee63e"/>
<rect x="739" y="348" width="3" height="12" fill="#c8f8c8"/>
<rect x="740" y="348" width="1" height="12" fill="#fff"/>
<rect x="748" y="342" width="1" height="41" fill="#3ee63e"/>
<rect x="746" y="359" width="5" height="17" fill="#3ee63e"/>
<rect x="747" y="360" width="3" height="15" fill="#c8f8c8"/>
<rect x="748" y="360" width="1" height="15" fill="#fff"/>
<rect x="756" y="332" width="1" height="59" fill="#3ee63e"/>
<rect x="754" y="345" width="5" height="32" fill="#3ee63e"/>
<rect x="755" y="346" width="3" height="30" fill="#000"/>
<rect x="764" y="345" width="1" height="38" fill="#3ee63e"/>
<rect x="762" y="347" width="5" height="18" fill="#3ee63e"/>
<rect x="763" y="348" width="3" height="16" fill="#c8f8c8"/>
<rect x="764" y="348" width="1" height="16" fill="#fff"/>
<rect x="772" y="321" width="1" height="64" fill="#3ee63e"/>
<rect x="770" y="347" width="5" height="20" fill="#3ee63e"/>
<rect x="771" y="348" width="3" height="18" fill="#000"/>
<rect x="780" y="345" width="1" height="62" fill="#3ee63e"/>
<rect x="778" y="347" width="5" height="32" fill="#3ee63e"/>
<rect x="779" y="348" width="3" height="30" fill="#c8f8c8"/>
<rect x="780" y="348" width="1" height="30" fill="#fff"/>
<rect x="788" y="374" width="1" height="50" fill="#3ee63e"/>
<rect x="786" y="379" width="5" height="45" fill="#3ee63e"/>
<rect x="787" y="380" width="3" height="43" fill="#c8f8c8"/>
<rect x="788" y="380" width="1" height="43" fill="#fff"/>
<rect x="796" y="396" width="1" height="40" fill="#3ee63e"/>
<rect x="794" y="418" width="5" height="1" fill="#3ee63e"/>
<rect x="804" y="413" width="1" height="49" fill="#3ee63e"/>
<rect x="802" y="415" width="5" height="32" fill="#3ee63e"/>
<rect x="803" y="416" width="3" height="30" fill="#c8f8c8"/>
<rect x="804" y="416" width="1" height="30" fill="#fff"/>
<rect x="812" y="419" width="1" height="70" fill="#3ee63e"/>
<rect x="810" y="435" width="5" height="42" fill="#3ee63e"/>
<rect x="811" y="436" width="3" height="40" fill="#c8f8c8"/>
<rect x="812" y="436" width="1" height="40" fill="#fff"/>
<rect x="820" y="467" width="1" height="64" fill="#3ee63e"/>
<rect x="818" y="477" width="5" height="46" fill="#3ee63e"/>
<rect x="819" y="478" width="3" height="44" fill="#c8f8c8"/>
<rect x="820" y="478" width="1" height="44" fill="#fff"/>
<rect x="828" y="521" width="1" height="88" fill="#3ee63e"/>
<rect x="826" y="522" width="5" height="66" fill="#3ee63e"/>
<rect x="827" y="523" width="3" height="64" fill="#c8f8c8"/>
<rect x="828" y="523" width="1" height="64" fill="#fff"/>
<rect x="836" y="508" width="1" height="82" fill="#3ee63e"/>
<rect x="834" y="543" width="5" height="47" fill="#3ee63e"/>
<rect x="835" y="544" width="3" height="45" fill="#000"/>
<rect x="844" y="532" width="1" height="51" fill="#3ee63e"/>
<rect x="842" y="543" width="5" height="25" fill="#3ee63e"/>
<rect x="843" y="544" width="3" height="23" fill="#c8f8c8"/>
<rect x="844" y="544" width="1" height="23" fill="#fff"/>
<rect x="852" y="555" width="1" height="38" fill="#3ee63e"/>
<rect x="850" y="559" width="5" height="11" fill="#3ee63e"/>
<rect x="851" y="560" width="3" height="9" fill="#000"/>
<rect x="860" y="545" width="1" height="28" fill="#3ee63e"/>
<rect x="858" y="560" width="5" height="11" fill="#3ee63e"/>
<rect x="859" y="561" width="3" height="9" fill="#c8f8c8"/>
<rect x="860" y="561" width="1" height="9" fill="#fff"/>
<rect x="868" y="530" width="1" height="43" fill="#3ee63e"/>
<rect x="866" y="537" width="5" height="35" fill="#3ee63e"/>
<rect x="867" y="538" width="3" height="33" fill="#000"/>
<rect x="876" y="522" width="1" height="44" fill="#3ee63e"/>
<rect x="874" y="538" width="5" height="15" fill="#3ee63e"/>
<rect x="875" y="539" width="3" height="13" fill="#c8f8c8"/>
<rect x="876" y="539" width="1" height="13" fill="#fff"/>
<rect x="884" y="530" width="1" height="34" fill="#3ee63e"/>
<rect x="882" y="550" width="5" height="6" fill="#3ee63e"/>
<rect x="883" y="551" width="3" height="4" fill="#c8f8c8"/>
<rect x="884" y="551" width="1" height="4" fill="#fff"/>
<rect x="892" y="528" width="1" height="28" fill="#3ee63e"/>
<rect x="890" y="538" width="5" height="18" fill="#3ee63e"/>
<rect x="891" y="539" width="3" height="16" fill="#000"/>
<rect x="900" y="526" width="1" height="25" fill="#3ee63e"/>
<rect x="898" y="538" width="5" height="11" fill="#3ee63e"/>
<rect x="899" y="539" width="3" height="9" fill="#c8f8c8"/>
<rect x="900" y="539" width="1" height="9" fill="#fff"/>
<rect x="908" y="522" width="1" height="30" fill="#3ee63e"/>
<rect x="906" y="523" width="5" height="25" fill="#3ee63e"/>
<rect x="907" y="524" width="3" height="23" fill="#000"/>
<rect x="916" y="486" width="1" height="45" fill="#3ee63e"/>
<rect x="914" y="508" width="5" height="18" fill="#3ee63e"/>
<rect x="915" y="509" width="3" height="16" fill="#000"/>
<rect x="924" y="506" width="1" height="55" fill="#3ee63e"/>
<rect x="922" y="506" width="5" height="43" fill="#3ee63e"/>
<rect x="923" y="507" width="3" height="41" fill="#c8f8c8"/>
<rect x="924" y="507" width="1" height="41" fill="#fff"/>
<rect x="932" y="548" width="1" height="28" fill="#3ee63e"/>
<rect x="930" y="550" width="5" height="24" fill="#3ee63e"/>
<rect x="931" y="551" width="3" height="22" fill="#c8f8c8"/>
<rect x="932" y="551" width="1" height="22" fill="#fff"/>
<rect x="940" y="555" width="1" height="29" fill="#3ee63e"/>
<rect x="938" y="572" width="5" height="11" fill="#3ee63e"/>
<rect x="939" y="573" width="3" height="9" fill="#c8f8c8"/>
<rect x="940" y="573" width="1" height="9" fill="#fff"/>
<rect x="948" y="543" width="1" height="40" fill="#3ee63e"/>
<rect x="946" y="552" width="5" height="30" fill="#3ee63e"/>
<rect x="947" y="553" width="3" height="28" fill="#000"/>
<rect x="956" y="520" width="1" height="35" fill="#3ee63e"/>
<rect x="954" y="540" width="5" height="15" fill="#3ee63e"/>
<rect x="955" y="541" width="3" height="13" fill="#000"/>
<rect x="964" y="533" width="1" height="22" fill="#3ee63e"/>
<rect x="962" y="538" width="5" height="11" fill="#3ee63e"/>
<rect x="963" y="539" width="3" height="9" fill="#c8f8c8"/>
<rect x="964" y="539" width="1" height="9" fill="#fff"/>
<rect x="972" y="537" width="1" height="54" fill="#3ee63e"/>
<rect x="970" y="552" width="5" height="31" fill="#3ee63e"/>
<rect x="971" y="553" width="3" height="29" fill="#c8f8c8"/>
<rect x="972" y="553" width="1" height="29" fill="#fff"/>
<rect x="980" y="583" width="1" height="88" fill="#3ee63e"/>
<rect x="978" y="584" width="5" height="81" fill="#3ee63e"/>
<rect x="979" y="585" width="3" height="79" fill="#c8f8c8"/>
<rect x="980" y="585" width="1" height="79" fill="#fff"/>
<rect x="988" y="648" width="1" height="46" fill="#3ee63e"/>
<rect x="986" y="650" width="5" height="17" fill="#3ee63e"/>
<rect x="987" y="651" width="3" height="15" fill="#000"/>
<rect x="996" y="608" width="1" height="46" fill="#3ee63e"/>
<rect x="994" y="618" width="5" height="34" fill="#3ee63e"/>
<rect x="995" y="619" width="3" height="32" fill="#000"/>
<rect x="1004" y="611" width="1" height="45" fill="#3ee63e"/>
<rect x="1002" y="616" width="5" height="11" fill="#3ee63e"/>
<rect x="1003" y="617" width="3" height="9" fill="#c8f8c8"/>
<rect x="1004" y="617" width="1" height="9" fill="#fff"/>
<rect x="1012" y="625" width="1" height="20" fill="#3ee63e"/>
<rect x="1010" y="628" width="5" height="9" fill="#3ee63e"/>
<rect x="1011" y="629" width="3" height="7" fill="#c8f8c8"/>
<rect x="1012" y="629" width="1" height="7" fill="#fff"/>
<rect x="1020" y="559" width="1" height="78" fill="#3ee63e"/>
<rect x="1018" y="574" width="5" height="63" fill="#3ee63e"/>
<rect x="1019" y="575" width="3" height="61" fill="#000"/>
<rect x="1028" y="565" width="1" height="39" fill="#3ee63e"/>
<rect x="1026" y="572" width="5" height="20" fill="#3ee63e"/>
<rect x="1027" y="573" width="3" height="18" fill="#c8f8c8"/>
<rect x="1028" y="573" width="1" height="18" fill="#fff"/>
<rect x="1036" y="568" width="1" height="25" fill="#3ee63e"/>
<rect x="1034" y="575" width="5" height="18" fill="#3ee63e"/>
<rect x="1035" y="576" width="3" height="16" fill="#000"/>
<rect x="1044" y="567" width="1" height="23" fill="#3ee63e"/>
<rect x="1042" y="569" width="5" height="7" fill="#3ee63e"/>
<rect x="1043" y="570" width="3" height="5" fill="#000"/>
<rect x="1052" y="552" width="1" height="27" fill="#3ee63e"/>
<rect x="1050" y="557" width="5" height="14" fill="#3ee63e"/>
<rect x="1051" y="558" width="3" height="12" fill="#000"/>
<rect x="1060" y="545" width="1" height="17" fill="#3ee63e"/>
<rect x="1058" y="550" width="5" height="7" fill="#3ee63e"/>
<rect x="1059" y="551" width="3" height="5" fill="#000"/>
<rect x="1068" y="521" width="1" height="33" fill="#3ee63e"/>
<rect x="1066" y="525" width="5" height="24" fill="#3ee63e"/>
<rect x="1067" y="526" width="3" height="22" fill="#000"/>
<rect x="1076" y="520" width="1" height="36" fill="#3ee63e"/>
<rect x="1074" y="523" width="5" height="4" fill="#3ee63e"/>
<rect x="1075" y="524" width="3" height="2" fill="#c8f8c8"/>
<rect x="1076" y="524" width="1" height="2" fill="#fff"/>
<rect x="1084" y="523" width="1" height="20" fill="#3ee63e"/>
<rect x="1082" y="526" width="5" height="5" fill="#3ee63e"/>
<rect x="1083" y="527" width="3" height="3" fill="#c8f8c8"/>
<rect x="1084" y="527" width="1" height="3" fill="#fff"/>
<rect x="1092" y="525" width="1" height="25" fill="#3ee63e"/>
<rect x="1090" y="530" width="5" height="8" fill="#3ee63e"/>
<rect x="1091" y="531" width="3" height="6" fill="#c8f8c8"/>
<rect x="1092" y="531" width="1" height="6" fill="#fff"/>
<rect x="1100" y="516" width="1" height="23" fill="#3ee63e"/>
<rect x="1098" y="532" width="5" height="7" fill="#3ee63e"/>
<rect x="1099" y="533" width="3" height="5" fill="#000"/>
<rect x="1108" y="532" width="1" height="64" fill="#3ee63e"/>
<rect x="1106" y="533" width="5" height="52" fill="#3ee63e"/>
<rect x="1107" y="534" width="3" height="50" fill="#c8f8c8"/>
<rect x="1108" y="534" width="1" height="50" fill="#fff"/>
<rect x="1116" y="570" width="1" height="34" fill="#3ee63e"/>
<rect x="1114" y="582" width="5" height="16" fill="#3ee63e"/>
<rect x="1115" y="583" width="3" height="14" fill="#c8f8c8"/>
<rect x="1116" y="583" width="1" height="14" fill="#fff"/>
<rect x="1124" y="583" width="1" height="32" fill="#3ee63e"/>
<rect x="1122" y="584" width="5" height="17" fill="#3ee63e"/>
<rect x="1123" y="585" width="3" height="15" fill="#000"/>
<rect x="1132" y="576" width="1" height="45" fill="#3ee63e"/>
<rect x="1130" y="584" width="5" height="34" fill="#3ee63e"/>
<rect x="1131" y="585" width="3" height="32" fill="#c8f8c8"/>
<rect x="1132" y="585" width="1" height="32" fill="#fff"/>
<rect x="1140" y="592" width="1" height="29" fill="#3ee63e"/>
<rect x="1138" y="594" width="5" height="22" fill="#3ee63e"/>
<rect x="1139" y="595" width="3" height="20" fill="#000"/>
<rect x="1148" y="586" width="1" height="18" fill="#3ee63e"/>
<rect x="1146" y="589" width="5" height="5" fill="#3ee63e"/>
<rect x="1147" y="590" width="3" height="3" fill="#c8f8c8"/>
<rect x="1148" y="590" width="1" height="3" fill="#fff"/>
<rect x="1156" y="586" width="1" height="32" fill="#3ee63e"/>
<rect x="1154" y="591" width="5" height="17" fill="#3ee63e"/>
<rect x="1155" y="592" width="3" height="15" fill="#c8f8c8"/>
<rect x="1156" y="592" width="1" height="15" fill="#fff"/>
<rect x="1164" y="589" width="1" height="38" fill="#3ee63e"/>
<rect x="1162" y="602" width="5" height="7" fill="#3ee63e"/>
<rect x="1163" y="603" width="3" height="5" fill="#000"/>
<rect x="1172" y="584" width="1" height="31" fill="#3ee63e"/>
<rect x="1170" y="591" width="5" height="12" fill="#3ee63e"/>
<rect x="1171" y="592" width="3" height="10" fill="#000"/>
<rect x="1180" y="570" width="1" height="25" fill="#3ee63e"/>
<rect x="1178" y="591" width="5" height="1" fill="#3ee63e"/>
<rect x="1188" y="555" width="1" height="40" fill="#3ee63e"/>
<rect x="1186" y="560" width="5" height="33" fill="#3ee63e"/>
<rect x="1187" y="561" width="3" height="31" fill="#000"/>
<rect x="1196" y="539" width="1" height="69" fill="#3ee63e"/>
<rect x="1194" y="560" width="5" height="40" fill="#3ee63e"/>
<rect x="1195" y="561" width="3" height="38" fill="#c8f8c8"/>
<rect x="1196" y="561" width="1" height="38" fill="#fff"/>
<rect x="1204" y="557" width="1" height="80" fill="#3ee63e"/>
<rect x="1202" y="569" width="5" height="31" fill="#3ee63e"/>
<rect x="1203" y="570" width="3" height="29" fill="#000"/>
<rect x="1212" y="481" width="1" height="87" fill="#3ee63e"/>
<rect x="1210" y="489" width="5" height="79" fill="#3ee63e"/>
<rect x="1211" y="490" width="3" height="77" fill="#000"/>
<rect x="1220" y="476" width="1" height="43" fill="#3ee63e"/>
<rect x="1218" y="488" width="5" height="14" fill="#3ee63e"/>
<rect x="1219" y="489" width="3" height="12" fill="#c8f8c8"/>
<rect x="1220" y="489" width="1" height="12" fill="#fff"/>
<rect x="1228" y="486" width="1" height="47" fill="#3ee63e"/>
<rect x="1226" y="499" width="5" height="23" fill="#3ee63e"/>
<rect x="1227" y="500" width="3" height="21" fill="#c8f8c8"/>
<rect x="1228" y="500" width="1" height="21" fill="#fff"/>
<rect x="1236" y="488" width="1" height="44" fill="#3ee63e"/>
<rect x="1234" y="489" width="5" height="35" fill="#3ee63e"/>
<rect x="1235" y="490" width="3" height="33" fill="#000"/>
<rect x="1244" y="471" width="1" height="39" fill="#3ee63e"/>
<rect x="1242" y="488" width="5" height="4" fill="#3ee63e"/>
<rect x="1243" y="489" width="3" height="2" fill="#000"/>
<rect x="1252" y="471" width="1" height="64" fill="#3ee63e"/>
<rect x="1250" y="488" width="5" height="45" fill="#3ee63e"/>
<rect x="1251" y="489" width="3" height="43" fill="#c8f8c8"/>
<rect x="1252" y="489" width="1" height="43" fill="#fff"/>
<rect x="1260" y="491" width="1" height="45" fill="#3ee63e"/>
<rect x="1258" y="526" width="5" height="6" fill="#3ee63e"/>
<rect x="1259" y="527" width="3" height="4" fill="#000"/>
<rect x="1268" y="523" width="1" height="62" fill="#3ee63e"/>
<rect x="1266" y="528" width="5" height="27" fill="#3ee63e"/>
<rect x="1267" y="529" width="3" height="25" fill="#c8f8c8"/>
<rect x="1268" y="529" width="1" height="25" fill="#fff"/>
<rect x="1276" y="506" width="1" height="73" fill="#3ee63e"/>
<rect x="1274" y="516" width="5" height="39" fill="#3ee63e"/>
<rect x="1275" y="517" width="3" height="37" fill="#000"/>
<rect x="1284" y="484" width="1" height="58" fill="#3ee63e"/>
<rect x="1282" y="486" width="5" height="31" fill="#3ee63e"/>
<rect x="1283" y="487" width="3" height="29" fill="#000"/>
<rect x="1292" y="479" width="1" height="50" fill="#3ee63e"/>
<rect x="1290" y="486" width="5" height="42" fill="#3ee63e"/>
<rect x="1291" y="487" width="3" height="40" fill="#c8f8c8"/>
<rect x="1292" y="487" width="1" height="40" fill="#fff"/>
<rect x="1300" y="530" width="1" height="69" fill="#3ee63e"/>
<rect x="1298" y="530" width="5" height="53" fill="#3ee63e"/>
<rect x="1299" y="531" width="3" height="51" fill="#c8f8c8"/>
<rect x="1300" y="531" width="1" height="51" fill="#fff"/>
<rect x="1308" y="577" width="1" height="16" fill="#3ee63e"/>
<rect x="1306" y="579" width="5" height="5" fill="#3ee63e"/>
<rect x="1307" y="580" width="3" height="3" fill="#c8f8c8"/>
<rect x="1308" y="580" width="1" height="3" fill="#fff"/>
</svg>
<rect x="43.5" y="119.5" width="1608" height="594" fill="none" stroke="#fff" stroke-width="1"/>
<rect x="1652" y="129" width="3" height="1" fill="#fff"/>
<rect x="1652" y="197" width="3" height="1" fill="#fff"/>
<rect x="1652" y="264" width="3" height="1" fill="#fff"/>
<rect x="1652" y="332" width="3" height="1" fill="#fff"/>
<rect x="1652" y="400" width="3" height="1" fill="#fff"/>
<rect x="1652" y="467" width="3" height="1" fill="#fff"/>
<rect x="1652" y="535" width="3" height="1" fill="#fff"/>
<rect x="1652" y="603" width="3" height="1" fill="#fff"/>
<rect x="1652" y="670" width="3" height="1" fill="#fff"/>
<rect x="44" y="714" width="1" height="3" fill="#fff"/>
<rect x="172" y="714" width="1" height="3" fill="#fff"/>
<rect x="300" y="714" width="1" height="3" fill="#fff"/>
<rect x="428" y="714" width="1" height="3" fill="#fff"/>
<rect x="556" y="714" width="1" height="3" fill="#fff"/>
<rect x="684" y="714" width="1" height="3" fill="#fff"/>
<rect x="812" y="714" width="1" height="3" fill="#fff"/>
<rect x="940" y="714" width="1" height="3" fill="#fff"/>
<rect x="1068" y="714" width="1" height="3" fill="#fff"/>
<rect x="1196" y="714" width="1" height="3" fill="#fff"/>
<rect x="1653" y="574" width="61" height="17" fill="#fff"/>
<path d="M1321 120H1336L1328.5 128Z" fill="#8a9aaa" shape-rendering="auto"/>
<rect x="64" y="150" width="239" height="179" fill="#f3dcb0"/>
<path d="M47 127H59L53 133Z" fill="#fff" shape-rendering="auto"/>
<g shape-rendering="auto" fill="none" stroke="#f0f0f0" stroke-width="1.3"><circle cx="1637.5" cy="133.3" r="7.6"/><path d="M1633.3 134.2Q1637.5 139.5 1641.7 134.2"/></g><g fill="#f0f0f0"><rect x="1634" y="130" width="2" height="1.3"/><rect x="1639" y="130" width="2" height="1.3"/></g>
</svg>
<div class="a" style="left:40px;top:740px;width:1674px;height:2px;background:#fff"></div>
<div class="a" style="left:0;top:773px;width:1714px;height:1px;background:#fafafa"></div>
<div class="a" style="left:0;top:774px;width:1714px;height:6px;background:#ececec"></div>
<div class="a" style="left:40px;top:742px;width:1674px;height:1px;background:#404040"></div>
<div class="a" style="left:382px;top:742px;width:153px;height:30px;background:#fff;border:1px solid #333;border-top:none"></div>
<div class="a" style="left:214px;top:745px;width:1px;height:25px;background:#8a8a8a"></div>
<div class="a" style="left:0;top:780px;width:1714px;height:1px;background:#a0a0a0"></div>
<div class="a" style="left:0;top:781px;width:1714px;height:110px;background:#fff"></div>
<div class="a" style="left:216px;top:781px;width:1px;height:29px;background:#e8e8e8"></div>
<div class="a" style="left:329px;top:781px;width:1px;height:29px;background:#e8e8e8"></div>
<div class="a" style="left:415px;top:781px;width:1px;height:29px;background:#e8e8e8"></div>
<div class="a" style="left:527px;top:781px;width:1px;height:29px;background:#e8e8e8"></div>
<div class="a" style="left:652px;top:781px;width:1px;height:29px;background:#e8e8e8"></div>
<div class="a" style="left:777px;top:781px;width:1px;height:29px;background:#e8e8e8"></div>
<div class="a" style="left:902px;top:781px;width:1px;height:29px;background:#e8e8e8"></div>
<div class="a" style="left:1027px;top:781px;width:1px;height:29px;background:#e8e8e8"></div>
<div class="a" style="left:1152px;top:781px;width:1px;height:29px;background:#e8e8e8"></div>
<div class="a" style="left:1339px;top:781px;width:1px;height:29px;background:#e8e8e8"></div>
<div class="a" style="left:0;top:842px;width:1714px;height:30px;background:#c8c8c8"></div>
<svg style="position:absolute;left:0;top:116px" width="40" height="660"><path d="M19.5 8.5L24.5 13.5L21.5 16.5L19.5 14.5L17.5 16.5L14.5 13.5Z" fill="none"/></svg>
<svg style="position:absolute;left:0;top:0" width="1714" height="891"><path d="M20 125L28 133M28 125L20 133" stroke="#111" stroke-width="2.2"/><path d="M15 161L20.5 155L26 161" stroke="#555" stroke-width="2.4" fill="none"/><path d="M15 719L20.5 725L26 719" stroke="#555" stroke-width="2.4" fill="none"/><path d="M1684 750.5V760.5L1677.5 755.5Z" fill="#a8a8a8"/><path d="M1706 750.5V760.5L1712 755.5Z" fill="#a8a8a8"/><path d="M1316.5 820L1333 836.5M1333 820L1316.5 836.5" stroke="#8a8a8a" stroke-width="1.6"/></svg>
<div style="position:absolute;left:1659.00px;top:122.10px;font-size:14px;line-height:16.1px;font-weight:400;color:#f2f2f2;font-family:'Liberation Sans',sans-serif;white-space:pre;transform:scaleX(1.0077);transform-origin:0 0;">1.15435</div>
<div style="position:absolute;left:1659.00px;top:190.10px;font-size:14px;line-height:16.1px;font-weight:400;color:#f2f2f2;font-family:'Liberation Sans',sans-serif;white-space:pre;transform:scaleX(1.0077);transform-origin:0 0;">1.15395</div>
<div style="position:absolute;left:1659.00px;top:257.10px;font-size:14px;line-height:16.1px;font-weight:400;color:#f2f2f2;font-family:'Liberation Sans',sans-serif;white-space:pre;transform:scaleX(1.0077);transform-origin:0 0;">1.15355</div>
<div style="position:absolute;left:1659.00px;top:325.10px;font-size:14px;line-height:16.1px;font-weight:400;color:#f2f2f2;font-family:'Liberation Sans',sans-serif;white-space:pre;transform:scaleX(1.0077);transform-origin:0 0;">1.15315</div>
<div style="position:absolute;left:1659.00px;top:393.10px;font-size:14px;line-height:16.1px;font-weight:400;color:#f2f2f2;font-family:'Liberation Sans',sans-serif;white-space:pre;transform:scaleX(1.0077);transform-origin:0 0;">1.15275</div>
<div style="position:absolute;left:1659.00px;top:460.10px;font-size:14px;line-height:16.1px;font-weight:400;color:#f2f2f2;font-family:'Liberation Sans',sans-serif;white-space:pre;transform:scaleX(1.0077);transform-origin:0 0;">1.15235</div>
<div style="position:absolute;left:1659.00px;top:528.10px;font-size:14px;line-height:16.1px;font-weight:400;color:#f2f2f2;font-family:'Liberation Sans',sans-serif;white-space:pre;transform:scaleX(1.0077);transform-origin:0 0;">1.15195</div>
<div style="position:absolute;left:1659.00px;top:596.10px;font-size:14px;line-height:16.1px;font-weight:400;color:#f2f2f2;font-family:'Liberation Sans',sans-serif;white-space:pre;transform:scaleX(1.0077);transform-origin:0 0;">1.15155</div>
<div style="position:absolute;left:1659.00px;top:663.10px;font-size:14px;line-height:16.1px;font-weight:400;color:#f2f2f2;font-family:'Liberation Sans',sans-serif;white-space:pre;transform:scaleX(1.0287);transform-origin:0 0;">1.15115</div>
<div style="position:absolute;left:1659.00px;top:575.10px;font-size:14px;line-height:16.1px;font-weight:400;color:#000;font-family:'Liberation Sans',sans-serif;white-space:pre;transform:scaleX(1.0077);transform-origin:0 0;">1.15167</div>
<div style="position:absolute;left:44.00px;top:718.10px;font-size:14px;line-height:16.1px;font-weight:400;color:#f2f2f2;font-family:'Liberation Sans',sans-serif;white-space:pre;transform:scaleX(1.0075);transform-origin:0 0;">19 Nov 2025</div>
<div style="position:absolute;left:172.00px;top:718.10px;font-size:14px;line-height:16.1px;font-weight:400;color:#f2f2f2;font-family:'Liberation Sans',sans-serif;white-space:pre;transform:scaleX(1.0204);transform-origin:0 0;">19 Nov 21:10</div>
<div style="position:absolute;left:300.00px;top:718.10px;font-size:14px;line-height:16.1px;font-weight:400;color:#f2f2f2;font-family:'Liberation Sans',sans-serif;white-space:pre;transform:scaleX(1.0204);transform-origin:0 0;">19 Nov 22:30</div>
<div style="position:absolute;left:428.00px;top:718.10px;font-size:14px;line-height:16.1px;font-weight:400;color:#f2f2f2;font-family:'Liberation Sans',sans-serif;white-space:pre;transform:scaleX(1.0204);transform-origin:0 0;">19 Nov 23:50</div>
<div style="position:absolute;left:556.00px;top:718.10px;font-size:14px;line-height:16.1px;font-weight:400;color:#f2f2f2;font-family:'Liberation Sans',sans-serif;white-space:pre;transform:scaleX(1.0204);transform-origin:0 0;">20 Nov 01:15</div>
<div style="position:absolute;left:684.00px;top:718.10px;font-size:14px;line-height:16.1px;font-weight:400;color:#f2f2f2;font-family:'Liberation Sans',sans-serif;white-space:pre;transform:scaleX(1.0204);transform-origin:0 0;">20 Nov 02:35</div>
<div style="position:absolute;left:812.00px;top:718.10px;font-size:14px;line-height:16.1px;font-weight:400;color:#f2f2f2;font-family:'Liberation Sans',sans-serif;white-space:pre;transform:scaleX(1.0204);transform-origin:0 0;">20 Nov 03:55</div>
<div style="position:absolute;left:940.00px;top:718.10px;font-size:14px;line-height:16.1px;font-weight:400;color:#f2f2f2;font-family:'Liberation Sans',sans-serif;white-space:pre;transform:scaleX(1.0204);transform-origin:0 0;">20 Nov 05:15</div>
<div style="position:absolute;left:1068.00px;top:718.10px;font-size:14px;line-height:16.1px;font-weight:400;color:#f2f2f2;font-family:'Liberation Sans',sans-serif;white-space:pre;transform:scaleX(1.0204);transform-origin:0 0;">20 Nov 06:35</div>
<div style="position:absolute;left:1196.00px;top:718.10px;font-size:14px;line-height:16.1px;font-weight:400;color:#f2f2f2;font-family:'Liberation Sans',sans-serif;white-space:pre;transform:scaleX(1.0204);transform-origin:0 0;">20 Nov 07:55</div>
<div style="position:absolute;left:65.00px;top:123.56px;font-size:13.5px;line-height:15.52px;font-weight:400;color:#f2f2f2;font-family:'Liberation Sans',sans-serif;white-space:pre;transform:scaleX(0.9587);transform-origin:0 0;">EURUSD.pc,M5</div>
<div style="position:absolute;left:168.20px;top:123.10px;font-size:14px;line-height:16.1px;font-weight:400;color:#f2f2f2;font-family:'Liberation Sans',sans-serif;white-space:pre;transform:scaleX(0.9959);transform-origin:0 0;">1.15169</div>
<div style="position:absolute;left:223.87px;top:123.10px;font-size:14px;line-height:16.1px;font-weight:400;color:#f2f2f2;font-family:'Liberation Sans',sans-serif;white-space:pre;transform:scaleX(0.9959);transform-origin:0 0;">1.15170</div>
<div style="position:absolute;left:279.54px;top:123.10px;font-size:14px;line-height:16.1px;font-weight:400;color:#f2f2f2;font-family:'Liberation Sans',sans-serif;white-space:pre;transform:scaleX(0.9959);transform-origin:0 0;">1.15162</div>
<div style="position:absolute;left:335.21px;top:123.10px;font-size:14px;line-height:16.1px;font-weight:400;color:#f2f2f2;font-family:'Liberation Sans',sans-serif;white-space:pre;transform:scaleX(0.9959);transform-origin:0 0;">1.15167</div>
<div style="position:absolute;left:1539.00px;top:124.02px;font-size:13px;line-height:14.95px;font-weight:400;color:#f2f2f2;font-family:'Liberation Sans',sans-serif;white-space:pre;transform:scaleX(1.0046);transform-origin:0 0;">Fish n Grid_fix</div>
<div style="position:absolute;left:82.00px;top:170.02px;font-size:13px;line-height:14.95px;font-weight:400;color:#2a6e1a;font-family:'Liberation Sans',sans-serif;white-space:pre;transform:scaleX(1.0101);transform-origin:0 0;-webkit-text-stroke:0.25px #2a6e1a;">Fish n Grid v1.00</div>
<div style="position:absolute;left:82.00px;top:197.02px;font-size:13px;line-height:14.95px;font-weight:400;color:#2a6e1a;font-family:'Liberation Sans',sans-serif;white-space:pre;transform:scaleX(1.0304);transform-origin:0 0;-webkit-text-stroke:0.25px #2a6e1a;">Copyright 2023,Poon Pak Hong ©</div>
<div style="position:absolute;left:82.00px;top:224.02px;font-size:13px;line-height:14.95px;font-weight:400;color:#2a6e1a;font-family:'Liberation Sans',sans-serif;white-space:pre;transform:scaleX(1.0814);transform-origin:0 0;-webkit-text-stroke:0.25px #2a6e1a;">Timeframe: M5</div>
<div style="position:absolute;left:82.00px;top:251.02px;font-size:13px;line-height:14.95px;font-weight:400;color:#2a6e1a;font-family:'Liberation Sans',sans-serif;white-space:pre;transform:scaleX(1.0326);transform-origin:0 0;-webkit-text-stroke:0.25px #2a6e1a;">First Order Lotsize: 0.01</div>
<div style="position:absolute;left:82.00px;top:278.02px;font-size:13px;line-height:14.95px;font-weight:400;color:#2a6e1a;font-family:'Liberation Sans',sans-serif;white-space:pre;transform:scaleX(1.0205);transform-origin:0 0;-webkit-text-stroke:0.25px #2a6e1a;">Time: 09:06:29</div>
<div style="position:absolute;left:82.00px;top:305.02px;font-size:13px;line-height:14.95px;font-weight:400;color:#2a6e1a;font-family:'Liberation Sans',sans-serif;white-space:pre;-webkit-text-stroke:0.25px #2a6e1a;">Price: 1.15167</div>
<div style="position:absolute;left:0.00px;top:11.41px;font-size:18px;line-height:20.7px;font-weight:400;color:#7c7c7c;font-family:'Liberation Sans',sans-serif;white-space:pre;transform:scaleX(1.1963);transform-origin:0 0;">t</div>
<div style="position:absolute;left:31.40px;top:11.41px;font-size:18px;line-height:20.7px;font-weight:400;color:#7c7c7c;font-family:'Liberation Sans',sans-serif;white-space:pre;transform:scaleX(0.9186);transform-origin:0 0;">Charts</div>
<div style="position:absolute;left:107.80px;top:11.41px;font-size:18px;line-height:20.7px;font-weight:400;color:#7c7c7c;font-family:'Liberation Sans',sans-serif;white-space:pre;transform:scaleX(0.9517);transform-origin:0 0;">Tools</div>
<div style="position:absolute;left:174.50px;top:11.41px;font-size:18px;line-height:20.7px;font-weight:400;color:#7c7c7c;font-family:'Liberation Sans',sans-serif;white-space:pre;transform:scaleX(1.0214);transform-origin:0 0;">Window</div>
<div style="position:absolute;left:266.00px;top:11.41px;font-size:18px;line-height:20.7px;font-weight:400;color:#7c7c7c;font-family:'Liberation Sans',sans-serif;white-space:pre;">Help</div>
<div style="position:absolute;left:187.80px;top:46.41px;font-size:18px;line-height:20.7px;font-weight:400;color:#000;font-family:'Liberation Sans',sans-serif;white-space:pre;transform:scaleX(0.9721);transform-origin:0 0;">New Order</div>
<div style="position:absolute;left:441.50px;top:46.41px;font-size:18px;line-height:20.7px;font-weight:400;color:#000;font-family:'Liberation Sans',sans-serif;white-space:pre;">AutoTrading</div>
<div style="position:absolute;left:264.50px;top:88.18px;font-size:15px;line-height:17.25px;font-weight:400;color:#4a4a4a;font-family:'Liberation Sans',sans-serif;white-space:pre;transform:scaleX(0.9499);transform-origin:0 0;-webkit-text-stroke:0.2px #4a4a4a;">M1</div>
<div style="position:absolute;left:305.30px;top:88.18px;font-size:15px;line-height:17.25px;font-weight:400;color:#4a4a4a;font-family:'Liberation Sans',sans-serif;white-space:pre;transform:scaleX(0.9547);transform-origin:0 0;-webkit-text-stroke:0.2px #4a4a4a;">M5</div>
<div style="position:absolute;left:343.80px;top:88.18px;font-size:15px;line-height:17.25px;font-weight:400;color:#4a4a4a;font-family:'Liberation Sans',sans-serif;white-space:pre;transform:scaleX(0.9216);transform-origin:0 0;-webkit-text-stroke:0.2px #4a4a4a;">M15</div>
<div style="position:absolute;left:384.70px;top:88.18px;font-size:15px;line-height:17.25px;font-weight:400;color:#4a4a4a;font-family:'Liberation Sans',sans-serif;white-space:pre;transform:scaleX(0.9353);transform-origin:0 0;-webkit-text-stroke:0.2px #4a4a4a;">M30</div>
<div style="position:absolute;left:430.20px;top:88.18px;font-size:15px;line-height:17.25px;font-weight:400;color:#4a4a4a;font-family:'Liberation Sans',sans-serif;white-space:pre;transform:scaleX(0.9121);transform-origin:0 0;-webkit-text-stroke:0.2px #4a4a4a;">H1</div>
<div style="position:absolute;left:469.90px;top:88.18px;font-size:15px;line-height:17.25px;font-weight:400;color:#4a4a4a;font-family:'Liberation Sans',sans-serif;white-space:pre;transform:scaleX(0.9694);transform-origin:0 0;-webkit-text-stroke:0.2px #4a4a4a;">H4</div>
<div style="position:absolute;left:511.90px;top:88.18px;font-size:15px;line-height:17.25px;font-weight:400;color:#4a4a4a;font-family:'Liberation Sans',sans-serif;white-space:pre;transform:scaleX(0.9694);transform-origin:0 0;-webkit-text-stroke:0.2px #4a4a4a;">D1</div>
<div style="position:absolute;left:551.50px;top:88.18px;font-size:15px;line-height:17.25px;font-weight:400;color:#4a4a4a;font-family:'Liberation Sans',sans-serif;white-space:pre;transform:scaleX(0.9867);transform-origin:0 0;-webkit-text-stroke:0.2px #4a4a4a;">W1</div>
<div style="position:absolute;left:591.20px;top:88.18px;font-size:15px;line-height:17.25px;font-weight:400;color:#4a4a4a;font-family:'Liberation Sans',sans-serif;white-space:pre;transform:scaleX(0.9516);transform-origin:0 0;-webkit-text-stroke:0.2px #4a4a4a;">MN</div>
<div style="position:absolute;left:62.80px;top:748.33px;font-size:17px;line-height:19.55px;font-weight:400;color:#6d6d6d;font-family:'Liberation Sans',sans-serif;white-space:pre;transform:scaleX(1.0207);transform-origin:0 0;">AUDCAD.pc,M15</div>
<div style="position:absolute;left:230.90px;top:748.33px;font-size:17px;line-height:19.55px;font-weight:400;color:#6d6d6d;font-family:'Liberation Sans',sans-serif;white-space:pre;transform:scaleX(1.0205);transform-origin:0 0;">NZDCAD.pc,M15</div>
<div style="position:absolute;left:398.90px;top:748.33px;font-size:17px;line-height:19.55px;font-weight:400;color:#000;font-family:'Liberation Sans',sans-serif;white-space:pre;transform:scaleX(0.9690);transform-origin:0 0;">EURUSD.pc,M5</div>
<div style="position:absolute;left:9.00px;top:741.33px;font-size:17px;line-height:19.55px;font-weight:400;color:#000;font-family:'Liberation Sans',sans-serif;white-space:pre;transform:scaleX(1.0582);transform-origin:0 0;">Co</div>
<div style="position:absolute;left:-6.00px;top:121.33px;font-size:17px;line-height:19.55px;font-weight:400;color:#000;font-family:'Liberation Sans',sans-serif;white-space:pre;transform:scaleX(1.1042);transform-origin:0 0;clip-path:inset(0 7px 0 0);">Na</div>
<div style="position:absolute;left:172.25px;top:788.38px;font-size:17.5px;line-height:20.12px;font-weight:400;color:#000;font-family:'Liberation Sans',sans-serif;white-space:pre;">Time</div>
<div style="position:absolute;left:284.75px;top:788.38px;font-size:17.5px;line-height:20.12px;font-weight:400;color:#000;font-family:'Liberation Sans',sans-serif;white-space:pre;">Type</div>
<div style="position:absolute;left:375.25px;top:788.38px;font-size:17.5px;line-height:20.12px;font-weight:400;color:#000;font-family:'Liberation Sans',sans-serif;white-space:pre;">Size</div>
<div style="position:absolute;left:461.80px;top:788.38px;font-size:17.5px;line-height:20.12px;font-weight:400;color:#000;font-family:'Liberation Sans',sans-serif;white-space:pre;transform:scaleX(1.0281);transform-origin:0 0;">Symbol</div>
<div style="position:absolute;left:609.30px;top:788.38px;font-size:17.5px;line-height:20.12px;font-weight:400;color:#000;font-family:'Liberation Sans',sans-serif;white-space:pre;transform:scaleX(0.9279);transform-origin:0 0;">Price</div>
<div style="position:absolute;left:735.60px;top:788.38px;font-size:17.5px;line-height:20.12px;font-weight:400;color:#000;font-family:'Liberation Sans',sans-serif;white-space:pre;">S / L</div>
<div style="position:absolute;left:859.36px;top:788.38px;font-size:17.5px;line-height:20.12px;font-weight:400;color:#000;font-family:'Liberation Sans',sans-serif;white-space:pre;">T / P</div>
<div style="position:absolute;left:984.60px;top:788.38px;font-size:17.5px;line-height:20.12px;font-weight:400;color:#000;font-family:'Liberation Sans',sans-serif;white-space:pre;transform:scaleX(0.9279);transform-origin:0 0;">Price</div>
<div style="position:absolute;left:1102.82px;top:788.38px;font-size:17.5px;line-height:20.12px;font-weight:400;color:#000;font-family:'Liberation Sans',sans-serif;white-space:pre;">Swap</div>
<div style="position:absolute;left:1292.84px;top:788.38px;font-size:17.5px;line-height:20.12px;font-weight:400;color:#000;font-family:'Liberation Sans',sans-serif;white-space:pre;">Profit</div>
<div style="position:absolute;left:1634.00px;top:788.38px;font-size:17.5px;line-height:20.12px;font-weight:400;color:#000;font-family:'Liberation Sans',sans-serif;white-space:pre;transform:scaleX(1.0414);transform-origin:0 0;">Comment</div>
<div style="position:absolute;left:50.70px;top:818.28px;font-size:17.5px;line-height:20.12px;font-weight:400;color:#000;font-family:'Liberation Sans',sans-serif;white-space:pre;">2025.11.20 09:06:00</div>
<div style="position:absolute;left:296.23px;top:818.28px;font-size:17.5px;line-height:20.12px;font-weight:400;color:#000;font-family:'Liberation Sans',sans-serif;white-space:pre;">sell</div>
<div style="position:absolute;left:375.24px;top:818.28px;font-size:17.5px;line-height:20.12px;font-weight:400;color:#000;font-family:'Liberation Sans',sans-serif;white-space:pre;">0.01</div>
<div style="position:absolute;left:446.69px;top:818.28px;font-size:17.5px;line-height:20.12px;font-weight:400;color:#000;font-family:'Liberation Sans',sans-serif;white-space:pre;">nzdchf.pc</div>
<div style="position:absolute;left:583.23px;top:818.28px;font-size:17.5px;line-height:20.12px;font-weight:400;color:#000;font-family:'Liberation Sans',sans-serif;white-space:pre;">0.45252</div>
<div style="position:absolute;left:708.23px;top:818.28px;font-size:17.5px;line-height:20.12px;font-weight:400;color:#000;font-family:'Liberation Sans',sans-serif;white-space:pre;">0.00000</div>
<div style="position:absolute;left:832.73px;top:818.28px;font-size:17.5px;line-height:20.12px;font-weight:400;color:#000;font-family:'Liberation Sans',sans-serif;white-space:pre;">0.00000</div>
<div style="position:absolute;left:958.23px;top:818.28px;font-size:17.5px;line-height:20.12px;font-weight:400;color:#000;font-family:'Liberation Sans',sans-serif;white-space:pre;">0.45251</div>
<div style="position:absolute;left:1112.44px;top:818.28px;font-size:17.5px;line-height:20.12px;font-weight:400;color:#000;font-family:'Liberation Sans',sans-serif;white-space:pre;">0.00</div>
<div style="position:absolute;left:1268.94px;top:818.28px;font-size:17.5px;line-height:20.12px;font-weight:400;color:#000;font-family:'Liberation Sans',sans-serif;white-space:pre;">0.02</div>
<div style="position:absolute;left:1637.14px;top:818.28px;font-size:17.5px;line-height:20.12px;font-weight:400;color:#000;font-family:'Liberation Sans',sans-serif;white-space:pre;">FishnGrid</div>
<div style="position:absolute;left:0.00px;top:848.53px;font-size:17px;line-height:19.55px;font-weight:700;color:#000;font-family:'Liberation Sans',sans-serif;white-space:pre;transform:scaleX(0.8829);transform-origin:0 0;">USC</div>
<div style="position:absolute;left:42.70px;top:848.53px;font-size:17px;line-height:19.55px;font-weight:700;color:#000;font-family:'Liberation Sans',sans-serif;white-space:pre;transform:scaleX(1.0321);transform-origin:0 0;">Equity: 527.50</div>
<div style="position:absolute;left:171.60px;top:848.53px;font-size:17px;line-height:19.55px;font-weight:700;color:#000;font-family:'Liberation Sans',sans-serif;white-space:pre;transform:scaleX(1.0504);transform-origin:0 0;">Margin: 1.12</div>
<div style="position:absolute;left:287.70px;top:848.53px;font-size:17px;line-height:19.55px;font-weight:700;color:#000;font-family:'Liberation Sans',sans-serif;white-space:pre;transform:scaleX(1.0269);transform-origin:0 0;">Free margin: 526.38</div>
<div style="position:absolute;left:462.90px;top:848.53px;font-size:17px;line-height:19.55px;font-weight:700;color:#000;font-family:'Liberation Sans',sans-serif;white-space:pre;transform:scaleX(1.0582);transform-origin:0 0;">Margin level: 47017.19%</div>
<div style="position:absolute;left:1264.25px;top:848.53px;font-size:17px;line-height:19.55px;font-weight:700;color:#000;font-family:'Liberation Sans',sans-serif;white-space:pre;">-0.04</div>
</body></html>
